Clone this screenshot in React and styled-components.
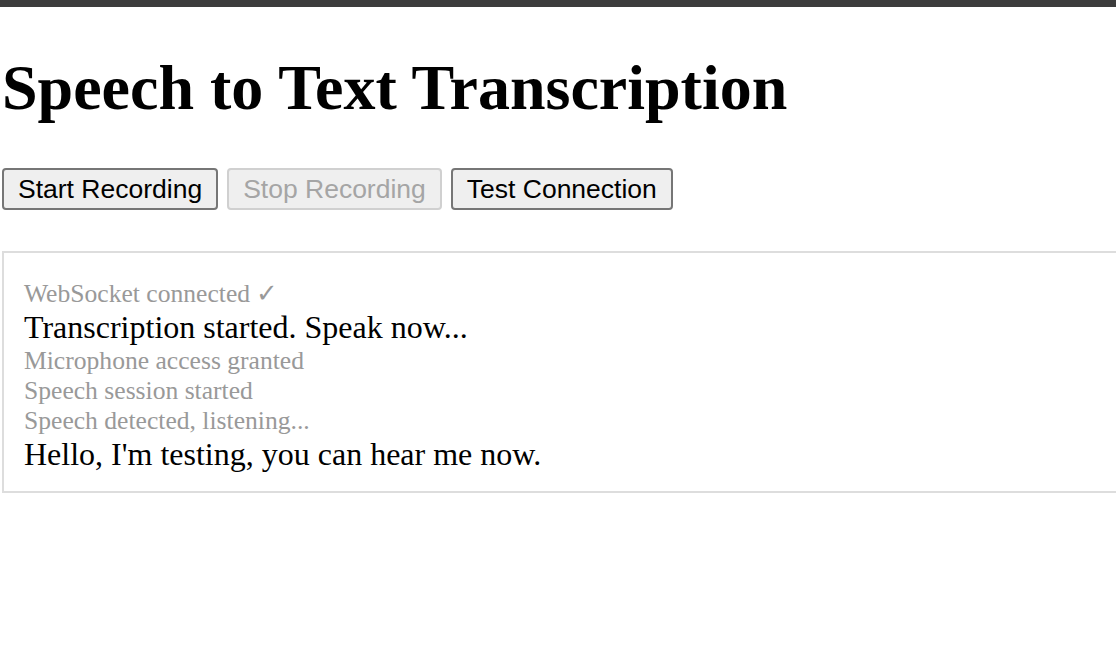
import React from "react";
import styled, { createGlobalStyle } from "styled-components";

const GlobalStyle = createGlobalStyle`
  html, body {
    margin: 0;
    padding: 0;
    background: #ffffff;
    overflow: hidden;
  }
  body {
    font-family: "Liberation Serif", "Times New Roman", serif;
  }
`;

const logs = [
  { text: "WebSocket connected \u2713", kind: "status" },
  { text: "Transcription started. Speak now...", kind: "final" },
  { text: "Microphone access granted", kind: "status" },
  { text: "Speech session started", kind: "status" },
  { text: "Speech detected, listening...", kind: "status" },
  { text: "Hello, I'm testing, you can hear me now.", kind: "final" },
];

const App = () => {
  return (
    <>
      <GlobalStyle />
      <TopBar />
      <Page>
        <Title>Speech to Text Transcription</Title>
        <Controls>
          <Button>Start Recording</Button>
          <Button disabled>Stop Recording</Button>
          <Button>Test Connection</Button>
        </Controls>
        <Transcript>
          {logs.map((log, i) => (
            <Line key={i} $kind={log.kind}>
              {log.text}
            </Line>
          ))}
        </Transcript>
      </Page>
    </>
  );
};

export default App;

const TopBar = styled.div`
  height: 7px;
  width: 100%;
  background-color: #3c3c3c;
`;

const Page = styled.div`
  padding-left: 2px;
`;

const Title = styled.h1`
  font-family: "Liberation Serif", "Times New Roman", serif;
  font-weight: bold;
  font-size: 64px;
  margin: 44px 0 43px 0;
  color: #000;
  white-space: nowrap;
`;

const Controls = styled.div`
  display: flex;
  flex-direction: row;
  gap: 9px;
`;

const Button = styled.button`
  font-family: "Liberation Sans", Arial, sans-serif;
  font-size: 26.5px;
  height: 42px;
  padding: 0 14px;
  border: 2px solid #767676;
  border-radius: 4px;
  background-color: #efefef;
  color: #000;
  &:disabled {
    border-color: #d0d0d0;
    background-color: #efefef;
    color: #a5a5a5;
  }
`;

const Transcript = styled.div`
  margin-top: 41px;
  margin-right: -20px;
  border: 2px solid #dddddd;
  padding: 25px 20px 18px 20px;
`;

const Line = styled.div`
  font-family: "Liberation Serif", "Times New Roman", serif;
  font-size: ${(p) => (p.$kind === "final" ? "32px" : "25.6px")};
  color: ${(p) => (p.$kind === "final" ? "#000" : "#999")};
`;
